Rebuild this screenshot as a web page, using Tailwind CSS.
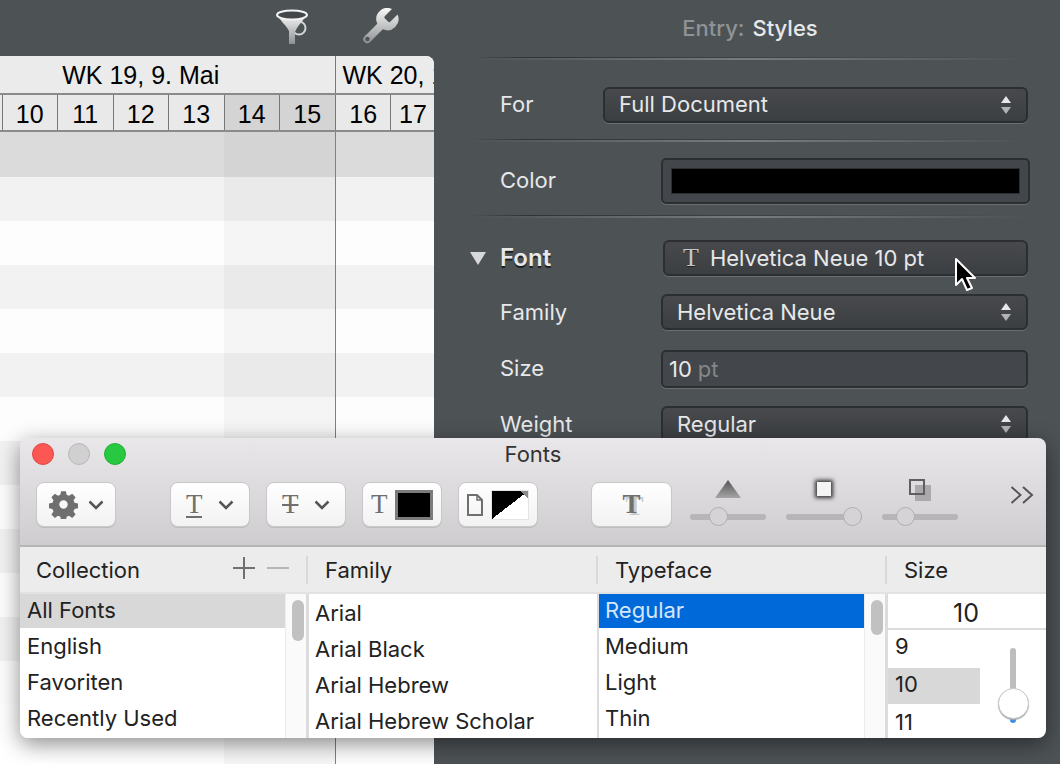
<!DOCTYPE html>
<html lang="en">
<head>
    <meta charset="UTF-8">
    <title>Styles</title>
    <script src="https://cdn.jsdelivr.net/npm/@tailwindcss/browser@4"></script>
</head>
<body class="w-[1060px] h-[764px] overflow-hidden">
<div class="relative flex w-[1060px] h-[764px] overflow-hidden bg-[#4d5255] font-['Inter',sans-serif]">

    <!-- left: toolbar + gantt -->
    <div class="flex flex-col w-[434px] shrink-0">
        <div class="flex h-[56px] shrink-0 justify-end items-start gap-[52px] pt-[8px] pr-[35px]">
            <svg class="w-[34px] h-[37px]" viewBox="0 0 34 37">
                <defs><linearGradient id="metal" x1="0" y1="0" x2="0" y2="1"><stop offset="0" stop-color="#f8f8f8"/><stop offset="1" stop-color="#8e9193"/></linearGradient></defs>
                <circle cx="24" cy="20" r="6.500" fill="none" stroke="#d4d5d6" stroke-width="2"/>
                <path d="M2 6c3 7 9 11 12 17v13h6V24C23 17 29 12 32 6z" fill="url(#metal)"/>
                <ellipse cx="17" cy="7" rx="15" ry="4.500" fill="#43474a" stroke="#f2f2f2" stroke-width="2"/>
            </svg>
            <svg class="w-[38px] h-[37px]" viewBox="2 2 20 20">
                <path d="M14.700 6.300a1 1 0 0 0 0 1.400l1.600 1.600a1 1 0 0 0 1.400 0l3.770-3.770a6 6 0 0 1-7.940 7.940l-6.910 6.910a2.120 2.120 0 0 1-3-3l6.910-6.910a6 6 0 0 1 7.940-7.940l-3.760 3.760z" fill="url(#metal)"/>
                <circle cx="5.200" cy="18.800" r="1.200" fill="#4d5255"/>
            </svg>
        </div>

        <div class="relative flex-1 overflow-hidden rounded-tr-[8px] bg-white text-black font-['Liberation_Sans',sans-serif] text-[25px]">
            <!-- week row -->
            <div class="flex h-[39px] -ml-[53px] bg-[#ebebeb] border-b-2 border-[#8a8a8a]">
                <div class="flex w-[388.500px] shrink-0 justify-center items-center pt-[3px] border-r border-[#777]">WK 19, 9. Mai</div>
                <div class="pl-[7px] pt-[3px] flex items-center whitespace-nowrap">WK 20, 16. Mai</div>
            </div>
            <!-- day row -->
            <div class="flex h-[37px] -ml-[53px] bg-[#e9e9e9] border-b-2 border-[#8a8a8a] leading-[39px] text-center">
                <div class="w-[55.500px] shrink-0 border-r border-[#777]">9</div>
                <div class="w-[55.500px] shrink-0 border-r border-[#777]">10</div>
                <div class="w-[55.500px] shrink-0 border-r border-[#777]">11</div>
                <div class="w-[55.500px] shrink-0 border-r border-[#777]">12</div>
                <div class="w-[55.500px] shrink-0 border-r border-[#777]">13</div>
                <div class="w-[55.500px] shrink-0 border-r border-[#777] bg-[#d4d4d4]">14</div>
                <div class="w-[55.500px] shrink-0 border-r border-[#777] bg-[#d4d4d4]">15</div>
                <div class="w-[55.500px] shrink-0 pl-[1px] border-r border-[#777]">16</div>
                <div class="w-[44px] shrink-0">17</div>
            </div>
            <!-- rows -->
            <div class="flex flex-col">
                <div class="h-[45px] bg-[#dbdbdb]"></div>
                <div class="h-[44px] bg-[#f2f2f2]"></div>
                <div class="h-[44px] bg-[#fdfdfd]"></div>
                <div class="h-[44px] bg-[#f2f2f2]"></div>
                <div class="h-[44px] bg-[#fdfdfd]"></div>
                <div class="h-[44px] bg-[#f2f2f2]"></div>
                <div class="h-[44px] bg-[#fdfdfd]"></div>
                <div class="h-[44px] bg-[#f2f2f2]"></div>
                <div class="h-[44px] bg-[#fdfdfd]"></div>
                <div class="h-[44px] bg-[#f2f2f2]"></div>
                <div class="h-[44px] bg-[#fdfdfd]"></div>
                <div class="h-[44px] bg-[#f2f2f2]"></div>
                <div class="h-[44px] bg-[#fdfdfd]"></div>
            </div>
            <!-- weekend tint and week line over the rows -->
            <div class="absolute left-[224px] top-[76px] bottom-0 w-[112px] bg-black/[0.03] border-r border-[#808080]"></div>
        </div>
    </div>

    <!-- right: inspector -->
    <div class="flex flex-col flex-1 pl-[36px] pr-[32px] text-[22px] text-[#e6e8ea]">
        <div class="h-[57px] flex items-center justify-center gap-[8px] pl-[2px] shrink-0 font-medium">
            <span class="text-[#8f9395]">Entry:</span><span>Styles</span>
        </div>
        <div class="shrink-0">
            <div class="h-px bg-linear-to-r from-transparent via-[#303437] via-10% to-transparent"></div>
            <div class="h-[2px] bg-linear-to-r from-transparent via-[#787c7f] to-transparent"></div>
        </div>

        <div class="flex items-center h-[79px] shrink-0 pl-[30px] pt-[10px]">
            <span class="w-[103px]">For</span>
            <div class="flex flex-1 items-center justify-between h-[36px] pl-[14px] pr-[14px] rounded-[6px] border-2 border-[#2c2f32] bg-linear-to-b from-[#47494c] to-[#3c3f42] shadow-[0_1px_0_#6a6e71]">
                <span>Full Document</span>
                <svg class="w-[12px] h-[20px]" viewBox="0 0 12 20"><path d="M6 1l5 7H1z" fill="#e8e8e8"/><path d="M6 19l5-7H1z" fill="#b0b2b4"/></svg>
            </div>
        </div>
        <div class="shrink-0">
            <div class="h-px bg-linear-to-r from-transparent via-[#303437] via-10% to-transparent"></div>
            <div class="h-[2px] bg-linear-to-r from-transparent via-[#787c7f] to-transparent"></div>
        </div>

        <div class="flex items-center h-[73px] shrink-0 pl-[30px] pt-[4px]">
            <span class="w-[161px]">Color</span>
            <div class="flex flex-1 h-[46px] -mr-[2px] p-[8px] rounded-[5px] border-2 border-[#2c2f32] bg-[#43464a] shadow-[0_1px_0_#6a6e71]">
                <div class="flex-1 bg-black border border-[#2c2f32]"></div>
            </div>
        </div>
        <div class="shrink-0">
            <div class="h-px bg-linear-to-r from-transparent via-[#303437] via-10% to-transparent"></div>
            <div class="h-[2px] bg-linear-to-r from-transparent via-[#787c7f] to-transparent"></div>
        </div>

        <div class="flex items-center h-[36px] mt-[22px] shrink-0">
            <svg class="w-[16px] h-[13px] shrink-0 mr-[14px]" viewBox="0 0 16 13"><path d="M0 0h16L8 13z" fill="#d6d8d9"/></svg>
            <span class="w-[163px] text-[24px] font-semibold [text-shadow:0_2px_0_#1b1d1f]">Font</span>
            <div class="flex flex-1 items-center gap-[11px] h-[36px] pl-[18px] rounded-[6px] border-2 border-[#2c2f32] bg-linear-to-b from-[#47494c] to-[#3c3f42] shadow-[0_1px_0_#6a6e71]">
                <span class="font-['Liberation_Serif',serif] text-[26px] leading-none text-[#c4c6c8] [text-shadow:0_1px_0_#222]">T</span>
                <span>Helvetica Neue 10 pt</span>
            </div>
        </div>
        <div class="flex items-center h-[36px] mt-[18px] shrink-0 pl-[30px]">
            <span class="w-[161px]">Family</span>
            <div class="flex flex-1 items-center justify-between h-[36px] pl-[14px] pr-[14px] rounded-[6px] border-2 border-[#2c2f32] bg-linear-to-b from-[#47494c] to-[#3c3f42] shadow-[0_1px_0_#6a6e71]">
                <span>Helvetica Neue</span>
                <svg class="w-[12px] h-[20px]" viewBox="0 0 12 20"><path d="M6 1l5 7H1z" fill="#e8e8e8"/><path d="M6 19l5-7H1z" fill="#b0b2b4"/></svg>
            </div>
        </div>
        <div class="flex items-center h-[38px] mt-[20px] shrink-0 pl-[30px]">
            <span class="w-[161px] -mt-[2px]">Size</span>
            <div class="flex flex-1 items-center gap-[6px] h-[38px] pl-[6px] rounded-[5px] border-2 border-[#2c2f32] bg-[#43464a] shadow-[0_1px_0_#6a6e71]">
                <span>10</span><span class="text-[#85888a]">pt</span>
            </div>
        </div>
        <div class="flex items-center h-[36px] mt-[18px] shrink-0 pl-[30px]">
            <span class="w-[161px]">Weight</span>
            <div class="flex flex-1 items-center justify-between h-[36px] pl-[14px] pr-[14px] rounded-[6px] border-2 border-[#2c2f32] bg-linear-to-b from-[#47494c] to-[#3c3f42]">
                <span>Regular</span>
                <svg class="w-[12px] h-[20px]" viewBox="0 0 12 20"><path d="M6 1l5 7H1z" fill="#e8e8e8"/><path d="M6 19l5-7H1z" fill="#b0b2b4"/></svg>
            </div>
        </div>
    </div>

    <!-- mouse pointer -->
    <svg class="absolute left-[954px] top-[257px] w-[22px] h-[35px]" viewBox="0 0 22 35">
        <path d="M2 2v26l6-6 5 11 5-2-5-10h8z" fill="#000" stroke="#fff" stroke-width="2" stroke-linejoin="round"/>
    </svg>

    <!-- Fonts window -->
    <div class="absolute left-[20px] top-[438px] flex flex-col w-[1026px] h-[300px] overflow-hidden rounded-[8px] text-[#222] text-[22px] shadow-[0_6px_22px_rgba(0,0,0,0.45)]">
        <div class="h-[109px] shrink-0 flex flex-col bg-linear-to-b from-[#e9e7e9] to-[#cfcdcf] border-b-2 border-[#b5b5b5]">
            <div class="relative flex items-center justify-center h-[33px] shrink-0 text-[22px] text-[#333]">
                Fonts
                <div class="absolute left-[12px] top-[5px] flex gap-[14px]">
                    <span class="w-[22px] h-[22px] rounded-full bg-[#fc5753] border border-[#df4744]"></span>
                    <span class="w-[22px] h-[22px] rounded-full bg-[#d0d0d0] border border-[#b8b8b8]"></span>
                    <span class="w-[22px] h-[22px] rounded-full bg-[#28c940] border border-[#1fb032]"></span>
                </div>
            </div>
            <div class="flex items-start pt-[11px] pl-[16px] text-[#6f6f6f] font-['Liberation_Serif',serif]">
                <div class="flex items-center justify-center gap-[10px] w-[80px] h-[45px] rounded-[8px] bg-linear-to-b from-white to-[#f2f2f2] border border-[#c8c8c8] shadow-[0_1px_0_#bdbdbd]">
                    <svg class="w-[29px] h-[29px]" viewBox="0 0 24 24"><path fill="#6f6f6f" fill-rule="evenodd" d="M10 1h4l.6 3 2 .8 2.600-1.700 2.800 2.800-1.700 2.600.8 2 3 .6v4l-3 .6-.8 2 1.700 2.600-2.800 2.800-2.600-1.700-2 .8-.6 3h-4l-.6-3-2-.8-2.600 1.700-2.800-2.800 1.700-2.600-.8-2-3-.6v-4l3-.6.8-2-1.700-2.600 2.800-2.800 2.600 1.700 2-.8zM12 8.500a3.500 3.500 0 1 0 0 7 3.500 3.500 0 0 0 0-7z"/></svg>
                    <svg class="w-[16px] h-[10px]" viewBox="0 0 16 10"><path d="M1.500 1.500L8 8l6.500-6.500" fill="none" stroke="#555" stroke-width="2.500"/></svg>
                </div>
                <div class="flex items-center justify-center gap-[16px] w-[80px] h-[45px] ml-[54px] rounded-[8px] bg-linear-to-b from-white to-[#f2f2f2] border border-[#c8c8c8] shadow-[0_1px_0_#bdbdbd]">
                    <span class="text-[27px] leading-[24px] w-[16px] text-center border-b-2 border-[#6f6f6f]">T</span>
                    <svg class="w-[16px] h-[10px]" viewBox="0 0 16 10"><path d="M1.500 1.500L8 8l6.500-6.500" fill="none" stroke="#555" stroke-width="2.500"/></svg>
                </div>
                <div class="flex items-center justify-center gap-[16px] w-[80px] h-[45px] ml-[16px] rounded-[8px] bg-linear-to-b from-white to-[#f2f2f2] border border-[#c8c8c8] shadow-[0_1px_0_#bdbdbd]">
                    <span class="text-[27px] leading-none w-[16px] text-center line-through decoration-2">T</span>
                    <svg class="w-[16px] h-[10px]" viewBox="0 0 16 10"><path d="M1.500 1.500L8 8l6.500-6.500" fill="none" stroke="#555" stroke-width="2.500"/></svg>
                </div>
                <div class="flex items-center gap-[7px] w-[80px] h-[45px] ml-[16px] pl-[8px] rounded-[8px] bg-linear-to-b from-white to-[#f2f2f2] border border-[#c8c8c8] shadow-[0_1px_0_#bdbdbd]">
                    <span class="text-[27px] leading-none">T</span>
                    <div class="w-[38px] h-[30px] bg-black border-[3px] border-[#7b7b7b]"></div>
                </div>
                <div class="flex items-center gap-[8px] w-[80px] h-[45px] ml-[16px] pl-[8px] rounded-[8px] bg-linear-to-b from-white to-[#f2f2f2] border border-[#c8c8c8] shadow-[0_1px_0_#bdbdbd]">
                    <svg class="w-[16px] h-[22px]" viewBox="0 0 16 22"><path d="M1 1h9l5 5v15H1z" fill="none" stroke="#6f6f6f" stroke-width="2"/><path d="M10 1v5h5" fill="none" stroke="#6f6f6f" stroke-width="1.500"/></svg>
                    <div class="relative w-[38px] h-[30px] bg-[linear-gradient(to_bottom_right,#000_50%,#fff_50%)] border border-[#e4e4e4]">
                        <span class="absolute right-0 top-0 w-[8px] h-[8px] bg-[linear-gradient(to_top_right,transparent_50%,#8a8a8a_50%)]"></span>
                    </div>
                </div>
                <div class="flex items-center justify-center w-[81px] h-[45px] ml-[53px] rounded-[8px] bg-linear-to-b from-white to-[#f2f2f2] border border-[#c8c8c8] shadow-[0_1px_0_#bdbdbd]">
                    <span class="text-[27px] leading-none font-bold [text-shadow:3px_2px_0_#c9c9c9]">T</span>
                </div>
                <!-- shadow sliders -->
                <div class="flex flex-col items-center w-[76px] ml-[18px] -mt-[2px]">
                    <svg class="w-[26px] h-[18px]" viewBox="0 0 26 18"><defs><linearGradient id="tri" x1="0" y1="0" x2="0" y2="1"><stop offset="0" stop-color="#555"/><stop offset="1" stop-color="#a5a5a5"/></linearGradient></defs><path d="M13 0l13 18H0z" fill="url(#tri)"/></svg>
                    <div class="relative w-full h-[6px] mt-[16px] rounded-full bg-[#b7b5b7]">
                        <span class="absolute left-[19px] -top-[7px] w-[19px] h-[19px] rounded-full bg-[#d5d3d5] border border-[#b0aeb0]"></span>
                    </div>
                </div>
                <div class="flex flex-col items-center w-[76px] ml-[20px] -mt-[2px]">
                    <div class="w-[14px] h-[14px] mt-[2px] mb-[2px] bg-[#f4f4f4] shadow-[0_0_4px_2px_#333]"></div>
                    <div class="relative w-full h-[6px] mt-[16px] rounded-full bg-[#b7b5b7]">
                        <span class="absolute left-[57px] -top-[7px] w-[19px] h-[19px] rounded-full bg-[#d5d3d5] border border-[#b0aeb0]"></span>
                    </div>
                </div>
                <div class="flex flex-col items-center w-[76px] ml-[20px] -mt-[2px]">
                    <div class="relative w-[22px] h-[18px]">
                        <div class="absolute left-[6px] top-[5px] w-[16px] h-[16px] bg-[#aaa8aa]"></div>
                        <div class="absolute left-0 -top-[1px] w-[16px] h-[16px] border-2 border-[#5f5f5f]"></div>
                    </div>
                    <div class="relative w-full h-[6px] mt-[16px] rounded-full bg-[#b7b5b7]">
                        <span class="absolute left-[14px] -top-[7px] w-[19px] h-[19px] rounded-full bg-[#d5d3d5] border border-[#b0aeb0]"></span>
                    </div>
                </div>
                <svg class="w-[24px] h-[18px] ml-[52px] mt-[4px] shrink-0" viewBox="0 0 24 18"><path d="M1.500 1l9 8-9 8M13 1l9 8-9 8" fill="none" stroke="#555" stroke-width="2"/></svg>
            </div>
        </div>

        <!-- column headers -->
        <div class="flex h-[47px] shrink-0 items-center bg-[#ececec] border-b-2 border-[#e2e2e2]">
            <div class="flex items-center w-[288px] h-[28px] pl-[16px] border-r-2 border-[#d8d8d8] leading-[28px]">
                <span class="flex-1">Collection</span>
                <svg class="w-[56px] h-[22px] mr-[17px] -mt-[4px]" viewBox="0 0 56 22"><path d="M0 11h22M11 0v22" stroke="#707070" stroke-width="2"/><path d="M34 11h22" stroke="#b5b5b5" stroke-width="2"/></svg>
            </div>
            <div class="w-[290px] h-[28px] pl-[17px] border-r-2 border-[#d8d8d8] leading-[28px]">Family</div>
            <div class="w-[289px] h-[28px] pl-[17px] border-r-2 border-[#d8d8d8] leading-[28px]">Typeface</div>
            <div class="flex-1 pl-[17px] leading-[28px]">Size</div>
        </div>

        <!-- lists -->
        <div class="flex flex-1 min-h-0 bg-white leading-[36px]">
            <div class="w-[265px] shrink-0 flex flex-col">
                <div class="h-[34px] pl-[7px] bg-[#d8d8d8] leading-[32px]">All Fonts</div>
                <div class="h-[36px] pl-[7px]">English</div>
                <div class="h-[36px] pl-[7px]">Favoriten</div>
                <div class="h-[36px] pl-[7px]">Recently Used</div>
            </div>
            <div class="w-[24px] shrink-0 pt-[6px] pl-[6px] bg-[#fafafa] border-l border-[#ececec] border-r-[3px] border-r-[#dcdcdc]">
                <div class="w-[12px] h-[41px] rounded-full bg-[#c1c1c1]"></div>
            </div>
            <div class="w-[288px] shrink-0 flex flex-col pl-[6px] pt-[1px]">
                <div class="h-[36px]">Arial</div>
                <div class="h-[36px]">Arial Black</div>
                <div class="h-[36px]">Arial Hebrew</div>
                <div class="h-[36px] whitespace-nowrap">Arial Hebrew Scholar</div>
            </div>
            <div class="w-[267px] shrink-0 flex flex-col border-l-2 border-[#dcdcdc]">
                <div class="h-[34px] pl-[6px] bg-[#0069d9] text-[#d5e6fa] leading-[32px]">Regular</div>
                <div class="h-[36px] pl-[6px]">Medium</div>
                <div class="h-[36px] pl-[6px]">Light</div>
                <div class="h-[36px] pl-[6px]">Thin</div>
            </div>
            <div class="w-[24px] shrink-0 pt-[6px] pl-[6px] bg-[#fafafa] border-l border-[#ececec] border-r-[3px] border-r-[#dcdcdc]">
                <div class="w-[12px] h-[35px] rounded-full bg-[#c1c1c1]"></div>
            </div>
            <div class="flex flex-col flex-1 min-w-0 overflow-hidden">
                <div class="h-[36px] shrink-0 pr-[2px] text-center text-[25px] leading-[38px] border-b-2 border-[#dcdcdc]">10</div>
                <div class="flex">
                    <div class="flex flex-col w-[92px] shrink-0">
                        <div class="h-[38px] pl-[7px] leading-[32px]">9</div>
                        <div class="h-[36px] pl-[7px] leading-[32px] bg-[#d8d8d8]">10</div>
                        <div class="h-[36px] pl-[7px]">11</div>
                    </div>
                    <!-- vertical size slider -->
                    <div class="relative flex-1">
                        <div class="absolute left-[30px] top-[18px] w-[6px] h-[44px] rounded-t-full bg-[#bdbdbd]"></div>
                        <div class="absolute left-[30px] top-[87px] w-[6px] h-[6px] rounded-b-full bg-[#3b8ee8]"></div>
                        <div class="absolute left-[18px] top-[58px] w-[31px] h-[31px] rounded-full bg-white border border-[#c8c8c8] shadow-[0_1px_1px_#aaa]"></div>
                    </div>
                </div>
            </div>
        </div>
    </div>
</div>
</body>
</html>
